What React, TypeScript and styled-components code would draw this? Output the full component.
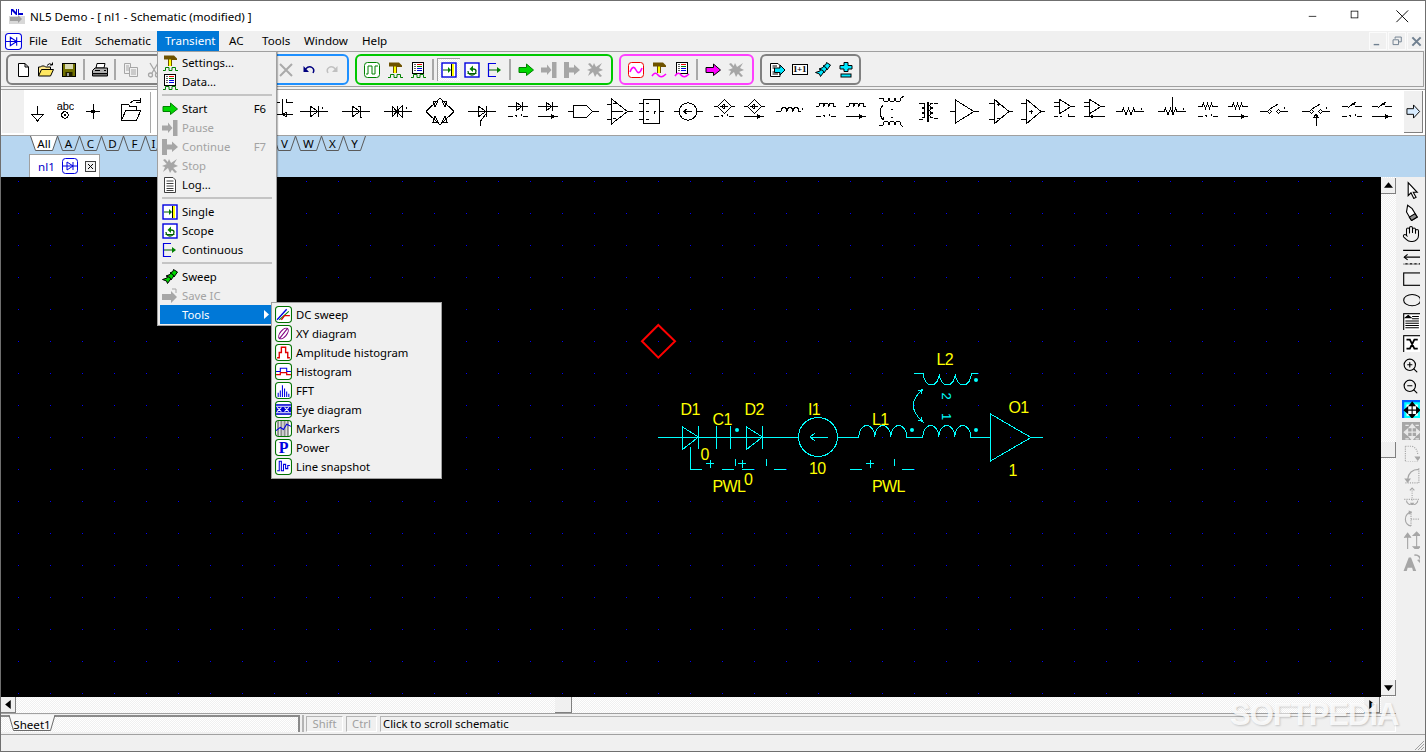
// @ts-nocheck
import React from 'react';
import styled, { createGlobalStyle } from 'styled-components';
import { Hand, ZoomIn, ZoomOut } from 'lucide-react';

const GlobalStyle = createGlobalStyle`
  html, body, #root { margin: 0; height: 100%; }
  body { overflow: hidden; background: #f0f0f0; font-family: "Noto Sans", "Liberation Sans", sans-serif; font-size: 11.3px; color: #000; }
  * { box-sizing: border-box; }
`;

const DITHER = 'repeating-conic-gradient(#f0f0f0 0 25%, #fff 0 50%) 0 0 / 2px 2px';

const Frame = styled.div`
  position: relative;
  height: 100vh;
  display: flex;
  flex-direction: column;
  border: 1px solid #6f6f6f;
  overflow: hidden;
`;

const Glyph = styled.svg.attrs((p) => ({ viewBox: p.$box || '0 0 16 16' }))`
  width: ${(p) => p.$w || 16}px;
  height: ${(p) => p.$h || p.$w || 16}px;
  display: block;
  flex: none;
`;

/* title bar */
const TitleBar = styled.div`
  height: 30px;
  background: #fff;
  display: flex;
  align-items: center;
  padding: 0 0 0 8px;
`;
const TitleText = styled.span`
  margin-left: 5px;
  font-size: 11.6px;
`;
const WinButtons = styled.div`
  margin-left: auto;
  display: flex;
`;
const WinButton = styled.div`
  width: ${(p) => p.$w}px;
  height: 30px;
  display: flex;
  align-items: center;
  justify-content: center;
`;

/* menu bar */
const MenuBar = styled.div`
  height: 20px;
  background: #f0f0f0;
  display: flex;
  align-items: center;
  padding-left: 4px;
`;
const MenuLogo = styled.div`
  margin-right: 5px;
`;
const MenuTitle = styled.div`
  width: ${(p) => p.$w}px;
  height: 20px;
  line-height: 19px;
  font-size: 11.6px;
  padding-left: ${(p) => p.$pl ?? 2}px;
  background: ${(p) => (p.$open ? '#0078d7' : 'transparent')};
  color: ${(p) => (p.$open ? '#fff' : '#000')};
`;
const MdiButtons = styled.div`
  margin-left: auto;
  display: flex;
  gap: 1px;
`;
const MdiButton = styled.div`
  width: 18px;
  height: 18px;
  border: 1px solid #fbfbfb;
  display: flex;
  align-items: center;
  justify-content: center;
`;

/* main toolbar */
const ToolRow = styled.div`
  height: 36px;
  margin-right: 1px;
  border: 1px solid #a0a0a0;
  border-left: 0;
  display: flex;
  gap: 6px;
  padding: 2px 0 0 5px;
`;
const ToolGroup = styled.div`
  height: 31px;
  border: 2px solid ${(p) => p.$c};
  border-radius: 6px;
  display: flex;
  align-items: center;
  padding: 0 ${(p) => p.$pr ?? 5}px 0 3px;
`;
const ToolBtn = styled.div`
  width: 23px;
  height: 23px;
  display: flex;
  align-items: center;
  justify-content: center;
  ${(p) => p.$on && `
    background: ${DITHER};
    border-top: 1px solid #a0a0a0;
    border-left: 1px solid #a0a0a0;
  `}
`;
const ToolSep = styled.div`
  width: 2px;
  height: 21px;
  margin: 0 3px;
  background: #a8a8a8;
`;

const RowGap = styled.div`
  height: 2px;
`;

/* component palette */
const Palette = styled.div`
  height: 47px;
  background: #fff;
  border-top: 1px solid #a0a0a0;
  border-bottom: 1px solid #a0a0a0;
  display: flex;
  align-items: stretch;
  position: relative;
`;
const PaletteHandle = styled.div`
  width: 22px;
  margin: 0 0 2px 1px;
  background: #f0f0f0;
`;
const Sym = styled.svg`
  display: block;
  flex: none;
  height: 45px;
  margin-left: ${(p) => p.$ml}px;
  shape-rendering: crispEdges;
`;
const PaletteNext = styled.div`
  position: absolute;
  left: 1403px;
  top: 1px;
  width: 19px;
  height: 42px;
  background: #f0f0f0;
  border-right: 1px solid #808080;
  border-bottom: 1px solid #808080;
  display: flex;
  align-items: center;
  justify-content: center;
`;

/* tabs under the palette */
const TabZone = styled.div`
  height: 41px;
  background: #b7d6f0;
`;
const LetterStrip = styled.div`
  height: 18px;
  display: flex;
  padding-left: 29px;
`;
const LetterTab = styled.div`
  position: relative;
  width: ${(p) => p.$w}px;
  height: 15px;
  margin-left: -1px;
  display: flex;
  align-items: center;
  justify-content: center;
  line-height: 15px;
  font-size: 11.6px;
  &:first-child { margin-left: 0; }
`;
const LetterShape = styled.svg`
  position: absolute;
  inset: 0;
  width: 100%;
  height: 100%;
`;
const LetterLabel = styled.span`
  position: relative;
`;
const DocTab = styled.div`
  width: 71px;
  height: 23px;
  margin-left: 28px;
  background: #fff;
  border: 1px solid #a0a0a0;
  border-bottom: 0;
  display: flex;
  align-items: center;
  padding-left: 8px;
  color: #0000c8;
  font-size: 11.6px;
`;
const DocName = styled.span`
  width: 24px;
`;
const CloseBox = styled(Glyph)`
  margin-left: 7px;
`;

/* workspace */
const Workspace = styled.div`
  flex: 1;
  min-height: 0;
  display: grid;
  grid-template-columns: 1fr 15px 29px;
  grid-template-rows: 1fr 17px;
`;
const Canvas = styled.div`
  position: relative;
  background: #000 radial-gradient(circle at 17.5px 4.5px, #0000ff 0 .9px, transparent .9px) 0 0 / 32px 32px;
  overflow: hidden;
`;
const Schematic = styled.svg`
  position: absolute;
  left: 629px;
  top: 143px;
  width: 430px;
  height: 180px;
  shape-rendering: crispEdges;
`;
const WireLabel = styled.text`
  font-family: "Liberation Sans", sans-serif;
  font-size: 16px;
  letter-spacing: -.6px;
  fill: #ffff00;
`;
const CoilMark = styled.text`
  font-family: "Liberation Sans", sans-serif;
  font-size: 13px;
  fill: #00ffff;
  text-anchor: middle;
  dominant-baseline: central;
`;
const VScroll = styled.div`
  background: ${DITHER};
  display: flex;
  flex-direction: column;
  padding: 1px 0;
`;
const HScroll = styled.div`
  grid-column: 1;
  background: ${DITHER};
  display: flex;
  align-items: flex-start;
  padding-right: 1px;
  border-bottom: 1px solid #a0a0a0;
`;
const ScrollBtn = styled.div`
  width: ${(p) => p.$w || 15}px;
  height: 16px;
  flex: none;
  background: #f0f0f0;
  border-right: 1px solid #808080;
  border-bottom: 1px solid #808080;
  display: flex;
  align-items: center;
  justify-content: center;
  margin: ${(p) => p.$m || 0};
`;
const Corner = styled.div`
  background: #f0f0f0;
  border-bottom: 1px solid #a0a0a0;
`;
const ToolRail = styled.div`
  grid-column: 3;
  grid-row: 1 / 3;
  background: #f0f0f0;
  display: flex;
  flex-direction: column;
  align-items: center;
  padding-top: 2px;
`;
const RailBtn = styled.div`
  width: 22px;
  height: 21.9px;
  flex: none;
  display: flex;
  align-items: center;
  justify-content: center;
`;

/* status rows */
const StatusRow = styled.div`
  height: 20px;
  display: flex;
  align-items: flex-start;
  padding-right: 29px;
`;
const SheetBox = styled.div`
  width: 299px;
  height: 17px;
  background: ${DITHER};
  border-top: 2px solid #8a8a8a;
  border-right: 2px solid #8a8a8a;
  position: relative;
  margin-top: 1px;
`;
const SheetTab = styled.div`
  position: absolute;
  left: 7px;
  top: -2px;
  width: 48px;
  height: 19px;
  display: flex;
  align-items: center;
  justify-content: center;
  font-size: 11.6px;
`;
const VDivider = styled.div`
  width: 2px;
  height: 17px;
  margin: 1px 2px 0 2px;
  background: #b4b4b4;
`;
const KeyBox = styled.div`
  width: ${(p) => p.$w}px;
  height: 16px;
  margin: 2px 3px 0 0;
  border-top: 1px solid #b4b4b4;
  border-left: 1px solid #b4b4b4;
  border-right: 1px solid #fff;
  border-bottom: 1px solid #fff;
  color: #a0a0a0;
  text-align: center;
  line-height: 14px;
`;
const HintBox = styled(KeyBox)`
  flex: 1;
  margin-right: 0;
  color: #000;
  text-align: left;
  padding-left: 2px;
`;
const BottomBar = styled.div`
  height: 17px;
  border-top: 1px solid #a0a0a0;
  position: relative;
`;
const Grip = styled.svg`
  position: absolute;
  right: 0;
  bottom: 0;
  width: 12px;
  height: 12px;
`;
const Watermark = styled.div`
  position: absolute;
  left: 1229px;
  top: 696px;
  font-family: "Liberation Sans", sans-serif;
  font-weight: 700;
  font-size: 31px;
  letter-spacing: -1px;
  color: rgba(255, 255, 255, .85);
  text-shadow: 1px 1px 2px rgba(0, 0, 0, .18);
  pointer-events: none;
`;

/* drop-down menus */
const DropMenu = styled.div`
  position: absolute;
  left: ${(p) => p.$x}px;
  top: ${(p) => p.$y}px;
  width: ${(p) => p.$w}px;
  background: #f0f0f0;
  border: 1px solid #a0a0a0;
  padding: ${(p) => p.$py ?? 1}px 2px;
  box-shadow: 1px 1px 1px rgba(0, 0, 0, .25);
`;
const DropItem = styled.div`
  height: 19px;
  display: flex;
  align-items: center;
  padding-left: ${(p) => p.$icon ?? 2}px;
  color: ${(p) => (p.$off ? '#a3a3a3' : p.$hot ? '#fff' : '#000')};
  background: ${(p) => (p.$hot ? '#0078d7' : 'transparent')};
  position: relative;
`;
const ItemIcon = styled.div`
  width: ${(p) => p.$w || 20}px;
  flex: none;
  display: flex;
`;
const Shortcut = styled.span`
  margin-left: auto;
  margin-right: 8px;
`;
const DropSep = styled.div`
  height: 2px;
  margin: 3px 2px 3px 2px;
  background: #c4c4c4;
`;
const SubArrow = styled.svg`
  position: absolute;
  right: 5px;
  top: 5px;
  width: 5px;
  height: 9px;
`;

/* ---- icons ---- */
const GREEN = '#00d800';
const DIS = '#a6a6a6';

const AppIcon = () => (
  <Glyph>
    <rect width="16" height="16" fill="#d8d8d8" />
    <rect width="16" height="8" fill="#fff" />
    <path d="M2 1H4L7 4V1H8V7H7L3 3V7H2Z M9 1H10V5H14V7H9Z" fill="#0000d0" />
    <path d="M1 9H9V7L13 11L9 15V13H1Z" fill="#a0a0a0" />
  </Glyph>
);
const Logo = ({ size = 16 }) => (
  <Glyph $w={size}>
    <rect x=".5" y=".5" width="15" height="15" rx="3" fill="#fff" stroke="#0000e0" />
    <path d="M1 8H15 M11 4V12 M5 4V12L11 8Z" fill="none" stroke="#0000e0" />
  </Glyph>
);
const NewIcon = () => <Glyph><path d="M3.5 1.5H10L13.5 5V14.5H3.5Z M10 1.5V5H13.5" fill="#fff" stroke="#000" /></Glyph>;
const OpenIcon = () => (
  <Glyph>
    <path d="M.5 14V5H2.5L3.5 4H6.5L7.5 5H12.5V7" fill="#ffe88a" stroke="#000" />
    <path d="M.5 14L3.5 7.5H15.5L12.5 14Z" fill="#ffe860" stroke="#000" />
    <path d="M9 3.5Q11 .5 14 2.5M14.5 .5V3H12" fill="none" stroke="#000" />
  </Glyph>
);
const SaveIcon = () => (
  <Glyph>
    <rect x="1.5" y="1.5" width="13" height="13" fill="#707000" stroke="#000" />
    <rect x="4" y="2" width="8" height="5" fill="#d8d8b0" />
    <rect x="4.5" y="10" width="7" height="4.5" fill="#202000" />
    <rect x="6" y="11" width="2" height="3" fill="#a0a0a0" />
  </Glyph>
);
const PrintIcon = () => (
  <Glyph>
    <path d="M5 1.5H13L12 6H4Z" fill="#fff" stroke="#000" />
    <path d="M.5 8.5L3 6H15.5V11.5H.5Z" fill="#b0b0b0" stroke="#000" />
    <path d="M.5 11.5H15.5V14H.5Z" fill="#707070" stroke="#000" />
    <path d="M3 8.5H8M12 8.5H14" stroke="#000" />
  </Glyph>
);
const CopyIcon = () => (
  <Glyph>
    <path d="M1.5 1.5H7.5V11.5H1.5Z M3 4H6M3 6H6M3 8H6" fill="#f0f0f0" stroke={DIS} />
    <path d="M6.5 5.5H14.5V14.5H6.5Z M8 8H13M8 10H13M8 12H13" fill="#f0f0f0" stroke={DIS} />
  </Glyph>
);
const CutIcon = () => (
  <Glyph>
    <path d="M4 1L10 11M12 1L6 11" stroke={DIS} fill="none" strokeWidth="1.3" />
    <circle cx="4.5" cy="13" r="2" fill="none" stroke={DIS} strokeWidth="1.3" />
    <circle cx="11.5" cy="13" r="2" fill="none" stroke={DIS} strokeWidth="1.3" />
  </Glyph>
);
const CrossIcon = () => <Glyph><path d="M2 2L14 14M14 2L2 14" stroke="#aaa" strokeWidth="2" /></Glyph>;
const UndoIcon = ({ c = '#000080' }) => (
  <Glyph>
    <path d="M4.5 7Q8 3.5 11 5.5T12 11" fill="none" stroke={c} strokeWidth="1.5" />
    <path d="M2.5 4V10H8Z" fill={c} />
  </Glyph>
);
const RedoIcon = () => (
  <Glyph>
    <path d="M11.5 7Q8 3.5 5 5.5T4 11" fill="none" stroke="#c0c0c0" strokeWidth="1.5" />
    <path d="M13.5 4V10H8Z" fill="#c0c0c0" />
  </Glyph>
);
const WaveBox = ({ c = '#008000', magenta = false }) => (
  <Glyph>
    <rect x=".5" y=".5" width="15" height="15" rx="3" fill="#fff" stroke={magenta ? '#f00000' : c} />
    {magenta
      ? <path d="M2 10Q5 2 8 8T14 6" fill="none" stroke="#ff00ff" strokeWidth="1.6" />
      : <path d="M2 12H4V4H8V12H11V4H14" fill="none" stroke={c} />}
  </Glyph>
);
const Hammer = ({ magenta = false }) => (
  <Glyph>
    <path d="M2 .5H12L15 3.5V5H10V11H6V4.5H2Z" fill="#6e5200" />
    <rect x="7" y="4.5" width="2" height="6.5" fill="#ffff00" />
    {magenta
      ? <path d="M1 14Q4 9 7 13T15 12" fill="none" stroke="#ff00ff" strokeWidth="1.5" />
      : <path d="M1 15.5H3.5V12.5H7V15.5H10V12.5H13.5V15.5H16" fill="none" stroke="#008000" />}
  </Glyph>
);
const DataIcon = ({ magenta = false }) => (
  <Glyph>
    <rect x="2.5" y=".5" width="11" height="11" fill="#fff" stroke="#000" />
    <path d="M7 2.5H12" stroke="#f00000" />
    <path d="M7 4.5H12" stroke="#008000" />
    <path d="M7 6.5H12" stroke="#0000e0" />
    <path d="M7 8.5H12" stroke="#0000e0" />
    <path d="M4 2.5H6M4 4.5H6M4 6.5H6M4 8.5H6" stroke="#606060" />
    {magenta
      ? <path d="M1 14Q4 9 7 13T15 12" fill="none" stroke="#ff00ff" strokeWidth="1.5" />
      : <path d="M1 15.5H3.5V12.5H7V15.5H10V12.5H13.5V15.5H16" fill="none" stroke="#008000" />}
  </Glyph>
);
const SingleIcon = () => (
  <Glyph>
    <rect x="1" y="1" width="14" height="14" fill="#fff" stroke="#0000e0" strokeWidth="1.4" />
    <path d="M2 8H8" stroke="#006000" />
    <path d="M7 5L10 8L7 11Z" fill="#008000" />
    <rect x="11" y="2" width="2" height="12" fill="#ffff00" />
    <path d="M10.5 2V14" stroke="#000" />
  </Glyph>
);
const ScopeIcon = () => (
  <Glyph>
    <rect x="1" y="1" width="14" height="14" fill="#fff" stroke="#0000e0" strokeWidth="1.4" />
    <path d="M4 9A4 4 0 0 0 12 9C12 7.5 10.5 7 9 7" fill="none" stroke="#006000" strokeWidth="1.3" />
    <path d="M9 3.5V10L5.5 7Z" fill="#008000" />
    <path d="M3.5 11.5H12.5" stroke="#006000" />
  </Glyph>
);
const ContIcon = () => (
  <Glyph>
    <path d="M9 1.5H1.5V14.5H9" fill="none" stroke="#0000e0" strokeWidth="1.2" />
    <path d="M2 8H11" stroke="#006000" />
    <path d="M10 5L14 8L10 11Z" fill="#008000" />
  </Glyph>
);
const ArrowIcon = ({ c = GREEN, line = '#008000' }) => (
  <Glyph><path d="M1 5.5H8.5V2L15.5 8L8.5 13.5V10.5H1Z" fill={c} stroke={line} /></Glyph>
);
const PauseIcon = () => (
  <Glyph>
    <path d="M0 5.5H6V2.5L10.5 8L6 13V10.5H0Z" fill={DIS} />
    <rect x="11" y="0" width="4.5" height="16" fill={DIS} />
  </Glyph>
);
const ContinueIcon = () => (
  <Glyph>
    <rect x="0" y="0" width="5" height="16" fill={DIS} />
    <path d="M5 5.5H10V2.5L16 8L10 13V10.5H5Z" fill={DIS} />
  </Glyph>
);
const StopIcon = () => (
  <Glyph>
    <path d="M1 2L3 1L15 14L13 15Z" fill={DIS} />
    <path d="M0 8L5 6L7 1L9 5L15 1L12 6L16 8L11 10L8 15L6 10L1 14L3 9Z" fill={DIS} />
  </Glyph>
);
const LogIcon = () => (
  <Glyph>
    <path d="M2.5 .5H11L13.5 3V15.5H2.5Z M4.5 4H11.5M4.5 6.5H11.5M4.5 9H11.5M4.5 11.5H11.5M4.5 13.5H11.5" fill="#fff" stroke="#404040" />
  </Glyph>
);
const LogArrowIcon = () => (
  <Glyph>
    <path d="M1.5 1.5H9L11 3.5V14.5H1.5Z M3.5 4H8M3.5 6H6M3.5 10H8M3.5 12H9" fill="#fff" stroke="#000" />
    <path d="M5.5 6H11V3L16 8L11 13V10.5H5.5Z" fill="#00e8ff" stroke="#000" />
  </Glyph>
);
const OnePlusOne = styled.div`
  width: 16px;
  height: 11px;
  border: 1px solid #000;
  background: #fff;
  font-family: "Liberation Serif", serif;
  font-weight: 700;
  font-size: 9px;
  line-height: 9px;
  text-align: center;
  letter-spacing: -.3px;
`;
const SweepIcon = ({ c = GREEN }) => (
  <Glyph>
    <path d="M.5 10.5L5 9L6 6.5L9.5 9L5.5 14.5L4.5 12Z" fill={c} stroke="#000" />
    <path d="M4 7L8 5.5L9 3.5L12.5 6L9 11L8 8.5Z" fill={c} stroke="#000" />
    <path d="M8 4L11 2.5L11.5 .5L15.5 3L12 8L11 5.5Z" fill={c} stroke="#000" />
  </Glyph>
);
const PlusMinus = () => (
  <Glyph>
    <path d="M6 .5H10V3.5H14V7H10V9.5H6V7H2V3.5H6Z" fill="#00e8ff" stroke="#000" />
    <rect x="3" y="12" width="10" height="3" fill="#00e8ff" stroke="#000" />
  </Glyph>
);
const SaveIcIcon = () => (
  <Glyph>
    <path d="M0 6H9V3L15 9L9 15V12H0Z" fill={DIS} />
    <path d="M10 1H14V5" fill="none" stroke={DIS} />
  </Glyph>
);

const ToolFrame = ({ children }) => (
  <Glyph $w={17}>
    <rect x=".5" y=".5" width="15" height="15" rx="3" fill="#fff" stroke="#007000" />
    {children}
  </Glyph>
);
const subIcons = {
  dc: <><path d="M2 13L11 3" stroke="#0000e0" strokeWidth="1.3" /><path d="M4 13L13 5" stroke="#008000" /><path d="M6 13L9 9H14" stroke="#e00000" fill="none" strokeWidth="1.2" /></>,
  xy: <><ellipse cx="8" cy="8" rx="3" ry="6" transform="rotate(40 8 8)" fill="none" stroke="#800080" /><path d="M4 13L12 3" stroke="#800080" /></>,
  amp: <path d="M2 13H4V8H6V3H10V8H12V13H14" fill="none" stroke="#e00000" strokeWidth="1.3" />,
  hist: <><path d="M1 8H5V5H11V8H15" fill="none" stroke="#0000e0" /><path d="M1 11H5V9H11V11H15" fill="none" stroke="#e00000" strokeWidth="1.2" /></>,
  fft: <path d="M3 14V10M5 14V8M7 14V3M9 14V6M11 14V9M13 14V11" stroke="#0000e0" />,
  eye: <><rect x="1" y="3" width="14" height="10" fill="#0000d0" /><path d="M1 5H15M1 11H15" stroke="#fff" /><path d="M2 6L6 10M6 6L2 10M9 6L13 10M13 6L9 10" stroke="#fff" /></>,
  markers: <><path d="M3 1V15M6 1V15M9 1V15M12 1V15" stroke="#909090" strokeWidth="2" /><path d="M1 10L5 7L8 9L11 4L15 6" fill="none" stroke="#0000e0" /></>,
  line: <path d="M2 12H4V3H6V12H8V6H10V10H12V7H14" fill="none" stroke="#0000e0" />,
};
const PowerGlyph = styled.text`
  font-family: "Liberation Serif", serif;
  font-size: 15px;
  font-weight: 700;
  fill: #0000e0;
`;

/* ---- palette symbols ---- */
const DIODE = 'M0 22.5H28 M10 17V28L18 22.5Z M18 17V28';
const SMALL_DIODE = 'M0 17.5H20 M8 13V22L14 17.5Z M14 13V22';
const LOW_DASH = 'M0 27.5H5 M7 26.5H9 M8 25.5V27.5 M13 25V27 M15 27.5H20';
const LOW_ARROW = 'M0 27.5H20 M13 25.5L17 27.5L13 29.5Z';
const COIL = 'a3 4 0 0 1 6 0';
const SMALL_COIL = 'M0 17.5H3 a2.5 3.5 0 0 1 5 0 a2.5 3.5 0 0 1 5 0 a2.5 3.5 0 0 1 5 0 M18 17.5H20';
const ZIG = 'l1.5 -3 l2.5 6 l2.5 -6 l2.5 6 l2.5 -6 l1.5 3';
const SMALL_ZIG = 'M0 17.5H4 l1.5 -3 l2 5 l2 -5 l2 5 l2 -5 l1 3 H20';
const SMALL_SW = 'M0 17.5H6 M13 17.5H20 M6 19L13 13 M13 13.5l-2 1 l1 1.5z';
const SMALL_TRI = 'M5 10V25L17 17.5Z M0 17.5H5 M17 17.5H21 M0 13H5';
const BRIDGE_CELL = 'M14 9L0 22.5L14 36L28 22.5Z';

const symbols = [
  { at: 31, w: 13, d: 'M6.5 17V25 M.5 25H12.5L6.5 32Z' },
  { at: 57, w: 17, d: '', abc: true },
  { at: 86, w: 15, d: 'M0 22.5H14 M7 15V30', dot: [7, 22.5, 2] },
  { at: 121, w: 21, d: 'M.5 31V15H7L9 17.5H15V21 M.5 31L5 21H20L15.5 31Z M9 14Q13 10 19 12 M19 9V13H15' },
  { at: 149.5, w: 2, d: 'M.5 3V44' },
  { at: 273, w: 20, d: 'M0 13H7 M9 10V17 M13 10V13H20 M0 25H13 M9 25.5L13 23.5V27.5Z M13 25H20 M9 17V25' },
  { at: 300, w: 28, d: DIODE + ' M22 18V20' },
  { at: 342, w: 28, d: DIODE + ' M16 17H18 M18 28H20' },
  { at: 384, w: 28, d: 'M0 22.5H28 M8 17V28L13 22.5Z M18 17V28L13 22.5Z M13 17V28 M22 18V20' },
  { at: 426, w: 28, d: BRIDGE_CELL + ' M7 12L12 12L9 18Z M21 12L16 12L19 18Z M7 33L12 33L9 27Z M21 33L16 33L19 27Z' },
  { at: 468, w: 28, d: DIODE + ' M18 25L12 33V37' },
  { at: 508, w: 20, d: SMALL_DIODE + ' ' + LOW_DASH },
  { at: 538, w: 20, d: SMALL_DIODE + ' ' + LOW_ARROW },
  { at: 568, w: 31, d: 'M0 22.5H5.5 M5.5 16.5H18.5L24.5 22.5L18.5 28.5H5.5Z M24.5 22.5H30.5' },
  { at: 607, w: 26, d: 'M4.5 10V35L20.5 22.5Z M0 15H4.5 M0 30H4.5 M20.5 22.5H25.5 M4.5 22.5H16 M6 14H9 M6 29H9' },
  { at: 639, w: 25, d: 'M4.5 10H20.5V34H4.5Z M0 14H4.5 M0 22H4.5 M0 30H4.5 M20.5 22H25 M7 14H10 M7 22H10 M7 30H10 M15 22H17 M15 22V25' },
  { at: 674, w: 30, d: 'M0 22.5H5 M23 22.5H29 M9.5 22.5H18 M9.5 22.5L13 20 M9.5 22.5L13 25', circle: [14, 22.5, 8.7] },
  { at: 714, w: 21, d: 'M0 17.5H3.5 M17.5 17.5H21 M10.5 10.5L17.5 17.5L10.5 24.5L3.5 17.5Z M7 17.5H14 M7 17.5L10 15.5V19.5Z ' + LOW_DASH },
  { at: 744, w: 21, d: 'M0 17.5H3.5 M17.5 17.5H21 M10.5 10.5L17.5 17.5L10.5 24.5L3.5 17.5Z M7 17.5H14 M7 17.5L10 15.5V19.5Z ' + LOW_ARROW },
  { at: 776, w: 28, d: `M0 22.5H5 ${COIL} ${COIL} ${COIL} M23 22.5H25 M26 19V21` },
  { at: 816, w: 20, d: SMALL_COIL + ' ' + LOW_DASH },
  { at: 846, w: 20, d: SMALL_COIL + ' ' + LOW_ARROW },
  { at: 877, w: 30, d: 'M2 9H6 a3 4 0 0 0 6 0 a3 4 0 0 0 6 0 a3 4 0 0 0 6 0 l3 -2 M6 36 a3 4 0 0 1 6 0 a3 4 0 0 1 6 0 a3 4 0 0 1 6 0 l2 2 M2 36H6 M6 16Q0 23 6 31 M4 29L6 31L7 28 M14 20H16 M14 28H16' },
  { at: 918, w: 20, d: 'M9 13V33 M10 13V33 M1 14H5 M1 30H5 M4 14a3 2.5 0 0 1 0 5 a3 2.5 0 0 1 0 5 a3 2.5 0 0 1 0 5 M15 14a3 2.5 0 0 0 0 5 a3 2.5 0 0 0 0 5 a3 2.5 0 0 0 0 5 M16 14H20 M16 29H20' },
  { at: 950, w: 29, d: 'M5.5 11V34L24 22.5Z M0 22.5H5.5 M24 22.5H29' },
  { at: 989, w: 24, d: 'M5 10V35L20 22.5Z M0 14H5 M0 30H5 M20 22.5H24 M8 15H11 M9.5 13.5V16.5 M8 29H11' },
  { at: 1021, w: 24, d: 'M5 10V35L20 22.5Z M0 14H5 M0 30H5 M20 22.5H24 M8 22.5H12 M10 20.5V24.5' },
  { at: 1054, w: 21, d: SMALL_TRI + ' M0 27.5H4 M6 27H8 M14 27H16 M14 25V27 M16 27.5H21' },
  { at: 1084, w: 21, d: SMALL_TRI + ' M0 27.5H21 M5 25V27.5 M7 26.5L10 27.5L7 29Z' },
  { at: 1116, w: 28, d: `M0 22.5H6 ${ZIG} H28 M25 19V21` },
  { at: 1158, w: 28, d: `M0 22.5H6 ${ZIG} H28 M14 8V23 M25 19V21` },
  { at: 1198, w: 20, d: SMALL_ZIG + ' ' + LOW_DASH },
  { at: 1228, w: 20, d: SMALL_ZIG + ' ' + LOW_ARROW },
  { at: 1260, w: 28, d: 'M0 22.5H8 M20 22.5H28 M10 20L18 15 M24 18V20', circle: [9.5, 22.5, 1.6], circle2: [18.5, 22.5, 1.6] },
  { at: 1302, w: 28, d: 'M0 22.5H8 M20 22.5H28 M10 20L18 15 M24 18V20 M14 37V26 M12 28L14 25L16 28Z', circle: [9.5, 22.5, 1.6], circle2: [18.5, 22.5, 1.6] },
  { at: 1342, w: 20, d: SMALL_SW + ' ' + LOW_DASH },
  { at: 1372, w: 20, d: SMALL_SW + ' ' + LOW_ARROW },
];

let cursor = 24;
const placed = symbols.map((s) => {
  const ml = s.at - cursor;
  cursor = s.at + s.w;
  return { ...s, ml };
});

// the tabs between I and V sit under the open menu
const letterTabs = [
  ['All', 28], ['A', 23], ['C', 23], ['D', 23], ['F', 23], ['I', 17], ['', 23], ['', 23], ['', 23], ['', 23], ['', 25],
  ['V', 23], ['W', 27], ['X', 23], ['Y', 23],
];

const menuItems = [
  { t: 'Settings...', i: <Hammer /> },
  { t: 'Data...', i: <DataIcon /> },
  'sep',
  { t: 'Start', i: <ArrowIcon />, k: 'F6' },
  { t: 'Pause', i: <PauseIcon />, off: true },
  { t: 'Continue', i: <ContinueIcon />, k: 'F7', off: true },
  { t: 'Stop', i: <StopIcon />, off: true },
  { t: 'Log...', i: <LogIcon /> },
  'sep',
  { t: 'Single', i: <SingleIcon /> },
  { t: 'Scope', i: <ScopeIcon /> },
  { t: 'Continuous', i: <ContIcon /> },
  'sep',
  { t: 'Sweep', i: <SweepIcon /> },
  { t: 'Save IC', i: <SaveIcIcon />, off: true },
];

const subItems = [
  ['DC sweep', subIcons.dc],
  ['XY diagram', subIcons.xy],
  ['Amplitude histogram', subIcons.amp],
  ['Histogram', subIcons.hist],
  ['FFT', subIcons.fft],
  ['Eye diagram', subIcons.eye],
  ['Markers', subIcons.markers],
  ['Power', <PowerGlyph x="3.5" y="13">P</PowerGlyph>],
  ['Line snapshot', subIcons.line],
];

const railIcons = [
  <Glyph $w={18}><path d="M5.5 1.5V13L8 10.5L10.5 15.5L12.5 14.5L10 10H13.5Z" fill="#fff" stroke="#000" /></Glyph>,
  <Glyph $w={18}><path d="M5 2L4 8L8.5 15.5L13.5 12.5L9 5Z" fill="#fff" stroke="#000" /><path d="M8.5 15.5L13.5 12.5L11.5 9.5L6.5 12.5Z" fill="#909090" stroke="#000" /></Glyph>,
  <Hand size={18} strokeWidth={1.4} />,
  <Glyph $w={18}><path d="M1 3H17M2 9H17M1 15H17" stroke="#000" /><path d="M5 6.5L2 9L5 11.5" fill="none" stroke="#000" /><path d="M1 15H17" stroke="#f0f0f0" strokeDasharray="2 2" /></Glyph>,
  <Glyph $w={18}><rect x="1.5" y="3.5" width="15" height="11" fill="none" stroke="#000" /></Glyph>,
  <Glyph $w={18}><ellipse cx="9" cy="9" rx="7.5" ry="5" fill="none" stroke="#000" /></Glyph>,
  <Glyph $w={18}><rect x="1.5" y="1.5" width="15" height="15" fill="#fff" stroke="#000" /><path d="M3 5L5.5 3L8 5Z M9 4H15M9 6H15M3 8H15M3 10H15M3 12H15M3 14H15" fill="#000" stroke="#000" /></Glyph>,
  <Glyph $w={18}><rect x="1.5" y="1.5" width="15" height="15" fill="#fff" stroke="#000" /><path d="M4 5H7L11 13H14M14 5H11L7 13H4" fill="none" stroke="#000" strokeWidth="1.6" /></Glyph>,
  <ZoomIn size={17} strokeWidth={1.6} />,
  <ZoomOut size={17} strokeWidth={1.6} />,
  <Glyph $w={18}><rect x="0" y="0" width="18" height="18" fill="#0060ff" /><rect x="2" y="2" width="14" height="14" fill="#00ffff" /><rect x="4" y="4" width="10" height="10" fill="#fff" /><path d="M9 3V15M3 9H15 M9 2L6.5 5H11.5Z M9 16L6.5 13H11.5Z M2 9L5 6.5V11.5Z M16 9L13 6.5V11.5Z" fill="#000" stroke="#000" /></Glyph>,
  <Glyph $w={18}><rect width="18" height="18" fill="#a6a6a6" /><path d="M9 4V14M4 9H14 M9 2L6.5 5H11.5Z M9 16L6.5 13H11.5Z M2 9L5 6.5V11.5Z M16 9L13 6.5V11.5Z M3 3H6M12 3H15M3 15H6M12 15H15" fill="#e8e8e8" stroke="#e8e8e8" /></Glyph>,
  <Glyph $w={18}><path d="M3 2H9Q14 4 14 10" fill="none" stroke={DIS} strokeDasharray="1 1" /><path d="M3 2V16H14" fill="none" stroke={DIS} strokeDasharray="1 1" /><path d="M11 11H17L14 15Z" fill={DIS} /></Glyph>,
  <Glyph $w={18}><path d="M15 2V15H3" fill="none" stroke={DIS} strokeDasharray="1 1" /><path d="M15 3Q6 3 5 12" fill="none" stroke={DIS} /><path d="M2 11H8L5 15Z" fill={DIS} /></Glyph>,
  <Glyph $w={18}><path d="M9 1V12M2 11H16" stroke={DIS} strokeDasharray="1 1" /><path d="M7 3L9 1L11 3M4 12A5 4 0 0 0 14 12" fill="none" stroke={DIS} /><path d="M7 14L11 14L9 17Z" fill={DIS} /></Glyph>,
  <Glyph $w={18}><path d="M8 9H17M8 2V16" stroke={DIS} strokeDasharray="1 1" /><path d="M8 3A5 6 0 0 0 8 15" fill="none" stroke={DIS} /><path d="M6 1L9 3L6 5Z" fill={DIS} /></Glyph>,
  <Glyph $w={18}><path d="M5 16V3M2 6L5 2L8 6 M13 1V17M10 4H16L13 1ZM10 14H16L13 17Z" fill={DIS} stroke={DIS} /></Glyph>,
  <Glyph $w={18}><path d="M1 17L6 4H8L13 17H10L9 13H5L4 17Z" fill={DIS} /><path d="M11 2A4 4 0 0 1 16 7M14 6L16 8L17 5" fill="none" stroke={DIS} strokeWidth="1.3" /></Glyph>,
];

const Tri = ({ d, w = 9, h = 9, c = '#000' }) => (
  <svg width={w} height={h} viewBox="0 0 8 8"><path d={d} fill={c} /></svg>
);

const App = () => {
  return (
    <Frame>
      <GlobalStyle />
      <TitleBar>
        <AppIcon />
        <TitleText>NL5 Demo - [ nl1 - Schematic (modified) ]</TitleText>
        <WinButtons>
          <WinButton $w={39}><Glyph $w={12}><path d="M1 8.5H11" stroke="#000" /></Glyph></WinButton>
          <WinButton $w={46}><Glyph $w={12}><rect x="1.5" y="1.5" width="9" height="9" fill="none" stroke="#000" /></Glyph></WinButton>
          <WinButton $w={46}><Glyph $w={15}><path d="M1.5 1.5L14 14M14 1.5L1.5 14" stroke="#000" /></Glyph></WinButton>
        </WinButtons>
      </TitleBar>

      <MenuBar>
        <MenuLogo><Logo size={17} /></MenuLogo>
        <MenuTitle $w={32}>File</MenuTitle>
        <MenuTitle $w={34}>Edit</MenuTitle>
        <MenuTitle $w={64}>Schematic</MenuTitle>
        <MenuTitle $open $pl={8} $w={62}>Transient</MenuTitle>
        <MenuTitle $pl={10} $w={41}>AC</MenuTitle>
        <MenuTitle $w={42}>Tools</MenuTitle>
        <MenuTitle $w={58}>Window</MenuTitle>
        <MenuTitle $w={40}>Help</MenuTitle>
        <MdiButtons>
          <MdiButton><Glyph $w={11}><path d="M1 12.5H9" stroke="#708090" strokeWidth="2" /></Glyph></MdiButton>
          <MdiButton><Glyph $w={11}><path d="M1.5 5.5H9.5V12.5H1.5Z M4.5 4V1.5H13.5V8.5H10" fill="none" stroke="#708090" strokeWidth="1.4" /></Glyph></MdiButton>
          <MdiButton><Glyph $w={11}><path d="M2 2L14 14M14 2L2 14" stroke="#708090" strokeWidth="3" /></Glyph></MdiButton>
        </MdiButtons>
      </MenuBar>

      <ToolRow>
        <ToolGroup $c="#808080" $pr={4}>
          <ToolBtn><NewIcon /></ToolBtn>
          <ToolBtn><OpenIcon /></ToolBtn>
          <ToolBtn><SaveIcon /></ToolBtn>
          <ToolSep />
          <ToolBtn><PrintIcon /></ToolBtn>
          <ToolSep />
          <ToolBtn><CopyIcon /></ToolBtn>
          <ToolBtn><CutIcon /></ToolBtn>
        </ToolGroup>
        <ToolGroup $c="#1e90ff" $pr={4}>
          <ToolBtn><CopyIcon /></ToolBtn>
          <ToolBtn><CopyIcon /></ToolBtn>
          <ToolBtn><CopyIcon /></ToolBtn>
          <ToolBtn><CopyIcon /></ToolBtn>
          <ToolBtn><CrossIcon /></ToolBtn>
          <ToolBtn><UndoIcon /></ToolBtn>
          <ToolBtn><RedoIcon /></ToolBtn>
        </ToolGroup>
        <ToolGroup $c="#00c800">
          <ToolBtn><WaveBox /></ToolBtn>
          <ToolBtn><Hammer /></ToolBtn>
          <ToolBtn><DataIcon /></ToolBtn>
          <ToolSep />
          <ToolBtn $on><SingleIcon /></ToolBtn>
          <ToolBtn><ScopeIcon /></ToolBtn>
          <ToolBtn><ContIcon /></ToolBtn>
          <ToolSep />
          <ToolBtn><ArrowIcon /></ToolBtn>
          <ToolBtn><PauseIcon /></ToolBtn>
          <ToolBtn><ContinueIcon /></ToolBtn>
          <ToolBtn><StopIcon /></ToolBtn>
        </ToolGroup>
        <ToolGroup $c="#ff40ff">
          <ToolBtn><WaveBox magenta /></ToolBtn>
          <ToolBtn><Hammer magenta /></ToolBtn>
          <ToolBtn><DataIcon magenta /></ToolBtn>
          <ToolSep />
          <ToolBtn><ArrowIcon c="#ff00ff" line="#000" /></ToolBtn>
          <ToolBtn><StopIcon /></ToolBtn>
        </ToolGroup>
        <ToolGroup $c="#808080" $pr={2}>
          <ToolBtn><LogArrowIcon /></ToolBtn>
          <ToolBtn><OnePlusOne>1+1</OnePlusOne></ToolBtn>
          <ToolBtn><SweepIcon c="#00e8ff" /></ToolBtn>
          <ToolBtn><PlusMinus /></ToolBtn>
        </ToolGroup>
      </ToolRow>
      <RowGap />

      <Palette>
        <PaletteHandle />
        {placed.map((s) => (
          <Sym key={s.at} $ml={s.ml} width={s.w} viewBox={`0 1 ${s.w} 45`}>
            {s.circle && <circle cx={s.circle[0]} cy={s.circle[1]} r={s.circle[2]} fill="#fff" stroke="#000" />}
            {s.circle2 && <circle cx={s.circle2[0]} cy={s.circle2[1]} r={s.circle2[2]} fill="#fff" stroke="#000" />}
            {s.d && <path d={s.d} fill="none" stroke={s.at === 149.5 ? '#a8a8a8' : '#000'} />}
            {s.dot && <circle cx={s.dot[0]} cy={s.dot[1]} r={s.dot[2]} fill="#000" />}
            {s.abc && (
              <>
                <text x="8.5" y="21" textAnchor="middle" fontSize="11" fontFamily="Liberation Sans, sans-serif">abc</text>
                <circle cx="8" cy="26" r="3.2" fill="none" stroke="#000" />
                <circle cx="8" cy="26" r="1.6" fill="#000" />
              </>
            )}
          </Sym>
        ))}
        <PaletteNext>
          <Glyph $w={15}><path d="M1 5H8V1L14.5 8L8 15V11H1Z" fill="#d8ecff" stroke="#000" /></Glyph>
        </PaletteNext>
      </Palette>

      <TabZone>
        <LetterStrip>
          {letterTabs.map(([label, w], i) => (
            <LetterTab key={i} $w={w}>
              <LetterShape viewBox={`0 0 ${w} 15`}>
                <path d={`M.5 0L5.5 14.5H${w - 5.5}L${w - 0.5} 0`} fill={i === 0 ? '#fff' : '#b7d6f0'} stroke="#5a5a5a" />
              </LetterShape>
              <LetterLabel>{label}</LetterLabel>
            </LetterTab>
          ))}
        </LetterStrip>
        <DocTab>
          <DocName>nl1</DocName>
          <Logo />
          <CloseBox $w={11} $box="0 0 11 11">
            <rect x=".5" y=".5" width="10" height="10" fill="#f0f0f0" stroke="#404040" />
            <path d="M3 3L8 8M8 3L3 8" stroke="#000" />
          </CloseBox>
        </DocTab>
      </TabZone>

      <Workspace>
        <Canvas>
          <Schematic viewBox="630 320 430 180">
            <path d="M658.3 325L675 341.3L658.3 357.7L642 341.3Z" fill="none" stroke="#ff0000" strokeWidth="2" shapeRendering="auto" />
            <g fill="none" stroke="#00ffff">
              <path d="M658 437H798 M682.5 427V449.5L698.5 437Z M698.5 426V449 M746.5 427V449.5L762.5 437Z M762.5 426V449 M716 426V449 M730 426V449" />
              <circle cx="818" cy="437" r="19.5" />
              <path d="M838 437H858.7 M828 437H810 M815 433L810 437L815 441" />
              <path d="M858.7 437a8 11.5 0 0 1 16 0a8 11.5 0 0 1 16 0a8 11.5 0 0 1 16 0H922.7a8 11.5 0 0 1 16 0a8 11.5 0 0 1 16 0a8 11.5 0 0 1 16 0H990.5" />
              <path d="M914.3 373.5H923.3a8 11.5 0 0 0 16 0a8 11.5 0 0 0 16 0a8 11.5 0 0 0 16 0H977.7" />
              <path d="M990.5 414V461L1031 437.5Z M1031 437.5H1043" />
              <path d="M922.7 389.5Q904 405 922.7 421.7 M918 391L922.7 389.5L921 394 M918 420L922.7 421.7L921 417" />
              <path d="M690.5 447V469.5H702 M706 463.5H714 M710 459.5V467.5 M722 469.5H734 M735 459V466 M738 463.5H746 M742 459.5V467.5 M742 469.5H754 M766.5 459V466 M774 469.5H786 M850 469.5H862 M866 463.5H874 M870 459.5V467.5 M894.5 459V466 M902 469.5H914" />
            </g>
            <g fill="#00ffff" shapeRendering="auto">
              <circle cx="737" cy="430" r="2" />
              <circle cx="912" cy="430" r="2" />
              <circle cx="976" cy="430" r="2" />
              <circle cx="976" cy="380" r="2" />
            </g>
            <CoilMark x="946.7" y="396" transform="rotate(90 946.7 396)">2</CoilMark>
            <CoilMark x="946.7" y="416.5" transform="rotate(90 946.7 416.5)">1</CoilMark>
            <WireLabel x="680.5" y="415">D1</WireLabel>
            <WireLabel x="712.5" y="425">C1</WireLabel>
            <WireLabel x="744.5" y="415">D2</WireLabel>
            <WireLabel x="808" y="415">I1</WireLabel>
            <WireLabel x="872" y="425">L1</WireLabel>
            <WireLabel x="936.5" y="365">L2</WireLabel>
            <WireLabel x="1008.5" y="413">O1</WireLabel>
            <WireLabel x="700.5" y="460">0</WireLabel>
            <WireLabel x="809" y="474">10</WireLabel>
            <WireLabel x="1008.5" y="476">1</WireLabel>
            <WireLabel x="712.5" y="492">PWL</WireLabel>
            <WireLabel x="744" y="485">0</WireLabel>
            <WireLabel x="872" y="492">PWL</WireLabel>
          </Schematic>
        </Canvas>
        <VScroll>
          <ScrollBtn><Tri d="M4 1L8 6H0Z" /></ScrollBtn>
          <ScrollBtn $m="248px 0 0"></ScrollBtn>
          <ScrollBtn $m="auto 0 0"><Tri d="M4 7L0 2H8Z" /></ScrollBtn>
        </VScroll>
        <ToolRail>
          {railIcons.map((icon, i) => (
            <RailBtn key={i}>{icon}</RailBtn>
          ))}
        </ToolRail>
        <HScroll>
          <ScrollBtn><Tri d="M1 4L6 0V8Z" /></ScrollBtn>
          <ScrollBtn $w={17} $m="0 0 0 539px"></ScrollBtn>
          <ScrollBtn $w={16} $m="0 0 0 auto"><Tri d="M7 4L2 0V8Z" /></ScrollBtn>
        </HScroll>
        <Corner />
      </Workspace>

      <StatusRow>
        <SheetBox>
          <SheetTab>
            <LetterShape viewBox="0 0 48 19">
              <path d="M1 0L5.5 15.5H42.5L47 0" fill="#f8f8f8" stroke="#6a6a6a" />
            </LetterShape>
            <LetterLabel>Sheet1</LetterLabel>
          </SheetTab>
        </SheetBox>
        <VDivider />
        <KeyBox $w={37}>Shift</KeyBox>
        <KeyBox $w={31}>Ctrl</KeyBox>
        <HintBox>Click to scroll schematic</HintBox>
      </StatusRow>
      <BottomBar>
        <Grip viewBox="0 0 12 12">
          <path d="M11 2L2 11M11 5L5 11M11 8L8 11" stroke="#a0a0a0" />
        </Grip>
      </BottomBar>

      <DropMenu $x={156} $y={50} $w={120}>
        {menuItems.map((item, i) =>
          item === 'sep' ? (
            <DropSep key={i} />
          ) : (
            <DropItem key={i} $off={item.off} $icon={2}>
              <ItemIcon $w={20}>{item.i}</ItemIcon>
              {item.t}
              {item.k && <Shortcut>{item.k}</Shortcut>}
            </DropItem>
          )
        )}
        <DropItem $hot $icon={22}>
          Tools
          <SubArrow viewBox="0 0 5 9"><path d="M0 0L5 4.5L0 9Z" fill="#fff" /></SubArrow>
        </DropItem>
      </DropMenu>

      <DropMenu $x={270} $y={301} $w={171} $py={2}>
        {subItems.map(([t, icon]) => (
          <DropItem key={t} $icon={1}>
            <ItemIcon $w={21}><ToolFrame>{icon}</ToolFrame></ItemIcon>
            {t}
          </DropItem>
        ))}
      </DropMenu>

      <Watermark>SOFTPEDIA</Watermark>
    </Frame>
  );
};

export default App;
